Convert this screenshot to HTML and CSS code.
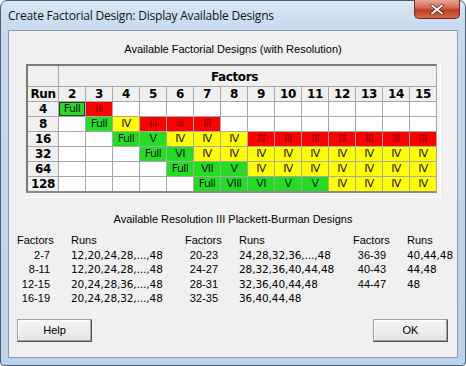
FILE: index.html
```html
<!DOCTYPE html>
<html>
<head>
<meta charset="utf-8">
<link rel="stylesheet" href="styles.css">
</head>
<body>
<div class="window">
  <div class="titlebar">
    <span class="title">Create Factorial Design: Display Available Designs</span>
    <div class="close">
      <svg width="14" height="11" viewBox="0 0 14 11"><path d="M2 1.5 L12 9.5 M12 1.5 L2 9.5" stroke="#4a1a1a" stroke-width="3.4" stroke-linecap="round"/><path d="M2 1.5 L12 9.5 M12 1.5 L2 9.5" stroke="#fff" stroke-width="2" stroke-linecap="round"/></svg>
    </div>
  </div>
  <div class="client">
    <div class="heading">Available Factorial Designs (with Resolution)</div>
    <div class="gridwrap">
      <div class="grid">
        <div class="hc"></div><div class="hc factors">Factors</div>
        <div class="hc">Run</div><div class="hc">2</div><div class="hc">3</div><div class="hc">4</div><div class="hc">5</div><div class="hc">6</div><div class="hc">7</div><div class="hc">8</div><div class="hc">9</div><div class="hc">10</div><div class="hc">11</div><div class="hc">12</div><div class="hc">13</div><div class="hc">14</div><div class="hc">15</div>

        <div class="hc">4</div><div class="c g sel">Full</div><div class="c r">III</div><div class="c"></div><div class="c"></div><div class="c"></div><div class="c"></div><div class="c"></div><div class="c"></div><div class="c"></div><div class="c"></div><div class="c"></div><div class="c"></div><div class="c"></div><div class="c"></div>

        <div class="hc">8</div><div class="c"></div><div class="c g">Full</div><div class="c y">IV</div><div class="c r">III</div><div class="c r">III</div><div class="c r">III</div><div class="c"></div><div class="c"></div><div class="c"></div><div class="c"></div><div class="c"></div><div class="c"></div><div class="c"></div><div class="c"></div>

        <div class="hc">16</div><div class="c"></div><div class="c"></div><div class="c g">Full</div><div class="c g">V</div><div class="c y">IV</div><div class="c y">IV</div><div class="c y">IV</div><div class="c r">III</div><div class="c r">III</div><div class="c r">III</div><div class="c r">III</div><div class="c r">III</div><div class="c r">III</div><div class="c r">III</div>

        <div class="hc">32</div><div class="c"></div><div class="c"></div><div class="c"></div><div class="c g">Full</div><div class="c g">VI</div><div class="c y">IV</div><div class="c y">IV</div><div class="c y">IV</div><div class="c y">IV</div><div class="c y">IV</div><div class="c y">IV</div><div class="c y">IV</div><div class="c y">IV</div><div class="c y">IV</div>

        <div class="hc">64</div><div class="c"></div><div class="c"></div><div class="c"></div><div class="c"></div><div class="c g">Full</div><div class="c g">VII</div><div class="c g">V</div><div class="c y">IV</div><div class="c y">IV</div><div class="c y">IV</div><div class="c y">IV</div><div class="c y">IV</div><div class="c y">IV</div><div class="c y">IV</div>

        <div class="hc">128</div><div class="c"></div><div class="c"></div><div class="c"></div><div class="c"></div><div class="c"></div><div class="c g">Full</div><div class="c g">VIII</div><div class="c g">VI</div><div class="c g">V</div><div class="c g">V</div><div class="c y">IV</div><div class="c y">IV</div><div class="c y">IV</div><div class="c y">IV</div>
      </div>
    </div>
    <div class="heading pbhead">Available Resolution III Plackett-Burman Designs</div>
    <div class="pb">
      <div class="f h">Factors</div><div class="rn h">Runs</div><div class="f h">Factors</div><div class="rn h">Runs</div><div class="f h">Factors</div><div class="rn h">Runs</div>
      <div class="f">2-7</div><div class="rn">12,20,24,28,...,48</div><div class="f">20-23</div><div class="rn">24,28,32,36,...,48</div><div class="f">36-39</div><div class="rn">40,44,48</div>
      <div class="f">8-11</div><div class="rn">12,20,24,28,...,48</div><div class="f">24-27</div><div class="rn">28,32,36,40,44,48</div><div class="f">40-43</div><div class="rn">44,48</div>
      <div class="f">12-15</div><div class="rn">20,24,28,36,...,48</div><div class="f">28-31</div><div class="rn">32,36,40,44,48</div><div class="f">44-47</div><div class="rn">48</div>
      <div class="f">16-19</div><div class="rn">20,24,28,32,...,48</div><div class="f">32-35</div><div class="rn">36,40,44,48</div><div class="f"></div><div class="rn"></div>
    </div>
    <div class="buttons">
      <button class="btn">Help</button>
      <button class="btn">OK</button>
    </div>
  </div>
</div>
</body>
</html>
```

FILE: styles.css
```css
html, body {
  margin: 0;
  padding: 0;
  width: 466px;
  height: 366px;
  overflow: hidden;
  background: #ffffff;
}
.window {
  box-sizing: border-box;
  width: 466px;
  height: 366px;
  border: 1px solid #4d5d70;
  border-radius: 7px 7px 4px 4px;
  background: linear-gradient(#d9e6f4 0px, #c6d9ee 30px, #bcd3ec 100%);
  display: flex;
  flex-direction: column;
  font-family: "Liberation Sans", Arial, sans-serif;
  color: #000;
}
.titlebar {
  height: 29px;
  position: relative;
  display: flex;
  align-items: center;
  padding-left: 7px;
}
.title {
  font-size: 12px;
  font-family: "Open Sans", "Liberation Sans", sans-serif;
  letter-spacing: -0.2px;
  color: #111;
}
.close {
  position: absolute;
  right: 5px;
  top: -1px;
  width: 46px;
  height: 19px;
  box-sizing: border-box;
  border: 1px solid #6b2a24;
  border-top: none;
  border-radius: 0 0 5px 5px;
  background: linear-gradient(#e8a79a 0%, #d5654f 45%, #c23a22 55%, #d66b48 100%);
  display: flex;
  align-items: center;
  justify-content: center;
}
.client {
  margin: 0 7px 7px 7px;
  flex: 1;
  min-width: 0;
  box-sizing: border-box;
  border: 1px solid #8a9cb0;
  background: #f0f0f0;
  padding: 11px 8px 0 8px;
  display: flex;
  flex-direction: column;
}
.heading {
  font-size: 11px;
  line-height: 14px;
  text-align: center;
}
.gridwrap {
  margin: 8px 0 0 9px;
  width: max-content;
  padding: 0 3px 4px 0;
  border-bottom: 1px solid #ffffff;
  border-right: 1px solid #ffffff;
  background: #f4f4f4;
}
.grid {
  display: grid;
  grid-template-columns: 30px repeat(14, 26px);
  grid-template-rows: 20px 14px repeat(6, 14px);
  gap: 1px;
  background: #a8a8a8;
  border-top: 2px solid #7a7a7a;
  border-left: 2px solid #7a7a7a;
  border-right: 1px solid #a8a8a8;
  border-bottom: 2px solid #8a8a8a;
  width: max-content;
}
.hc {
  background: #f0f0f0;
  font-weight: bold;
  font-size: 12px;
  line-height: 15px;
  text-align: center;
  font-family: "DejaVu Sans", sans-serif;
  letter-spacing: -0.4px;
}
.factors {
  grid-column: span 14;
  text-align: left;
  padding-left: 152px;
  line-height: 22px;
}
.c {
  background: #ffffff;
  font-size: 11px;
  line-height: 14px;
  text-align: center;
  font-family: "DejaVu Sans", sans-serif;
  letter-spacing: -0.6px;
  color: #111;
  box-sizing: border-box;
}
.g { background: #22dd22; }
.y { background: #ffff00; }
.r { background: #ff0000; color: #8a0000; }
.sel { border: 1px solid #333; line-height: 12px; }
.pbhead {
  margin-top: 14px;
}
.pb {
  margin-top: 7px;
  display: grid;
  grid-template-columns: 36px 132px 36px 132px 36px 1fr;
  font-size: 11px;
  line-height: 14.5px;
  font-family: "Liberation Sans", sans-serif;
}
.f {
  text-align: right;
  padding-right: 3px;
}
.f.h {
  text-align: left;
  padding-right: 0;
  white-space: nowrap;
}
.rn {
  padding-left: 18px;
  white-space: nowrap;
  font-family: "DejaVu Sans", sans-serif;
  font-size: 10.5px;
  letter-spacing: -0.1px;
}
.rn.h {
  font-family: "Liberation Sans", sans-serif;
  font-size: 11px;
  letter-spacing: 0;
}
.buttons {
  margin-top: 13px;
  display: flex;
  justify-content: space-between;
  padding-right: 1px;
}
.btn {
  width: 75px;
  height: 23px;
  font-family: "Liberation Sans", sans-serif;
  font-size: 11px;
  color: #000;
  background: linear-gradient(#f6f6f6, #e4e4e4);
  border: 1px solid #a0a0a0;
  border-right-color: #555;
  border-bottom-color: #555;
  box-shadow: inset -1px -1px 0 #a0a0a0, inset 1px 1px 0 #ffffff;
  border-radius: 0;
  padding: 0;
}
```
